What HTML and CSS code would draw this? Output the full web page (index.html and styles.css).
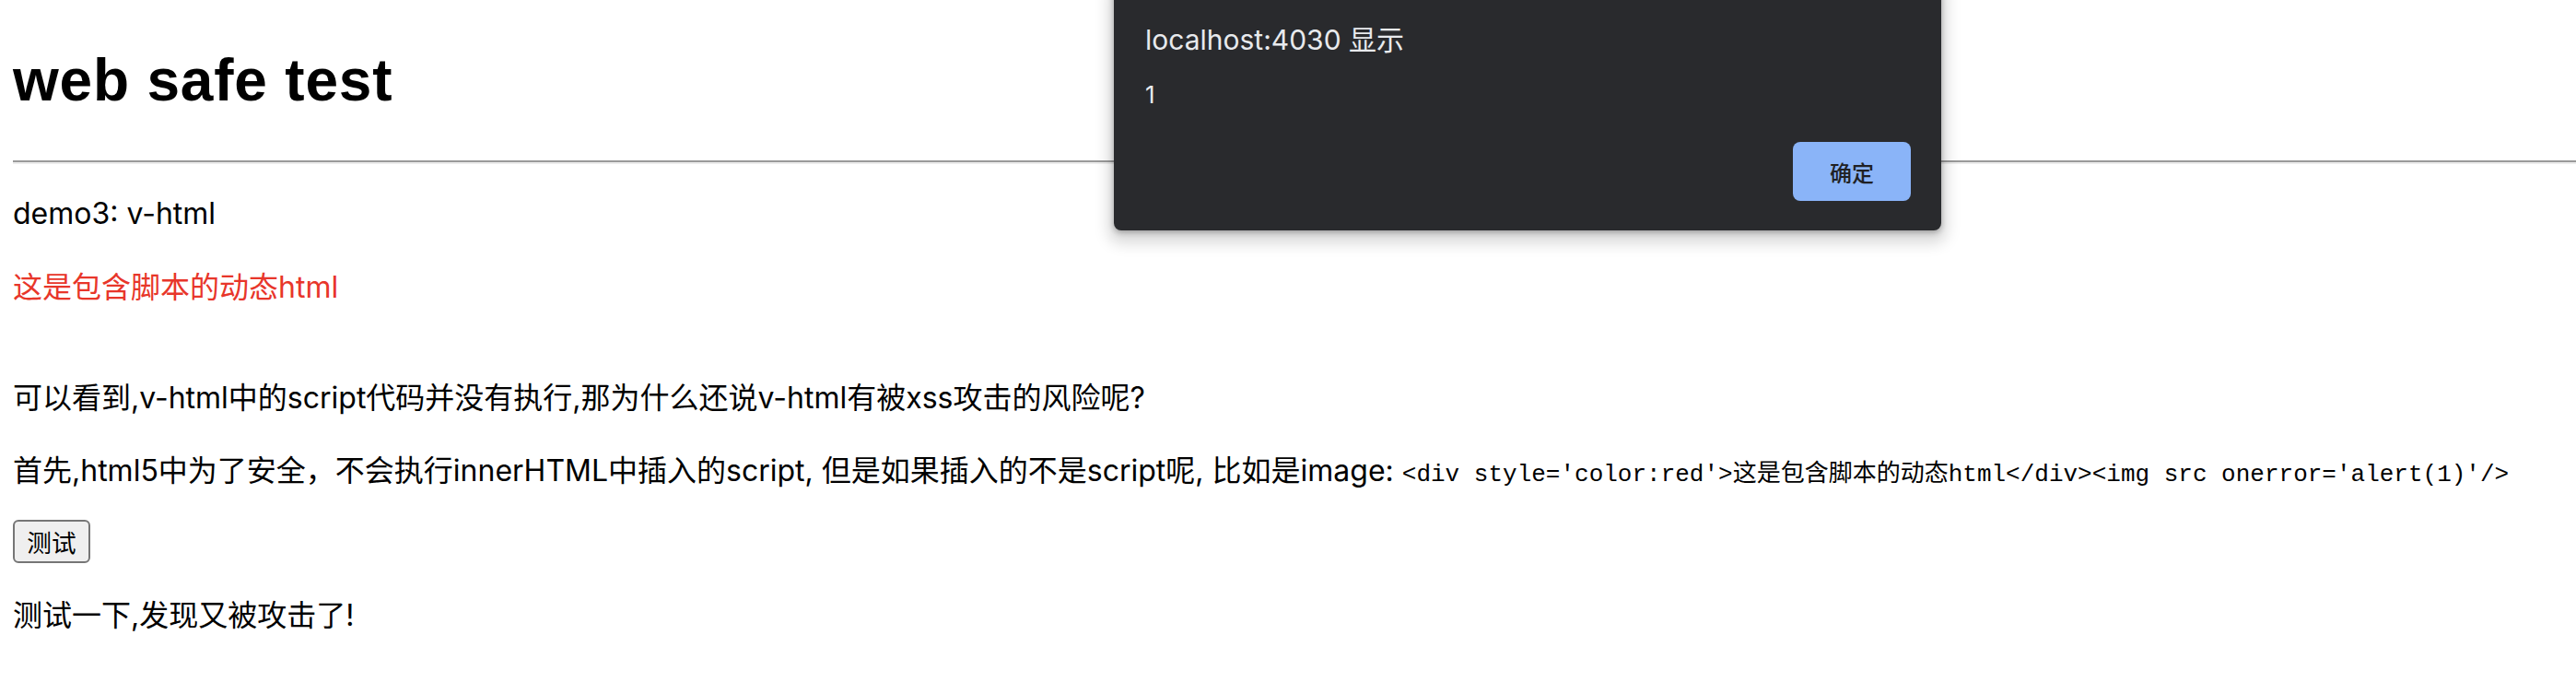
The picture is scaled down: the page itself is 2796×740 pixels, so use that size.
FILE: index.html
```html
<!DOCTYPE html>
<html lang="zh-CN">
<head>
<meta charset="utf-8">
<title>web safe test</title>
<link rel="stylesheet" href="styles.css">
</head>
<body>
<div class="app">
  <h1 class="title">web safe test</h1>
  <hr class="rule">
  <div class="demo">
    <p class="para para-first">demo3: v-html</p>
    <div class="dynamic"><div class="red">这是包含脚本的动态html</div></div>
    <p class="para para-after-dynamic">可以看到,v-html中的script代码并没有执行,那为什么还说v-html有被xss攻击的风险呢?</p>
    <p class="para para-second">首先,html5中为了安全，不会执行innerHTML中插入的script, 但是如果插入的不是script呢, 比如是image: <code class="code">&lt;div style='color:red'&gt;这是包含脚本的动态html&lt;/div&gt;&lt;img src onerror='alert(1)'/&gt;</code></p>
    <button class="btn" type="button">测试</button>
    <p class="para para-last">测试一下,发现又被攻击了!</p>
  </div>
</div>
<div class="dialog" role="alertdialog">
  <div class="dialog-title">localhost:4030 显示</div>
  <div class="dialog-msg">1</div>
  <div class="dialog-actions"><button class="dialog-ok" type="button">确定</button></div>
</div>
</body>
</html>
```
FILE: styles.css
```css
html, body {
  background: #ffffff;
}
body {
  margin: 0;
  padding: 0 0 0 14px;
  font-family: "Inter", "Noto Sans CJK SC", sans-serif;
  font-size: 32px;
  line-height: 48px;
  color: #000000;
}
.app {
  display: flow-root;
}
.title {
  margin: 43px 0 0;
  font-family: "Liberation Sans", "Noto Sans CJK SC", sans-serif;
  font-size: 64px;
  font-weight: 700;
  line-height: 88px;
  letter-spacing: 0.8px;
}
.rule {
  margin: 43px 0 0;
  height: 0;
  border: 0;
  border-top: 2px solid #9a9a9a;
  border-bottom: 2px solid #ececec;
}
.demo {
  display: flex;
  flex-direction: column;
  align-items: flex-start;
}
.para {
  margin: 0;
}
.para-first {
  margin-top: 30px;
}
.dynamic {
  margin-top: 32px;
}
.para-after-dynamic {
  margin-top: 72px;
}
.para-second {
  margin-top: 31px;
}
.para-last {
  margin-top: 33px;
}
.red {
  color: #e8362a;
}
.code {
  font-family: "Liberation Mono", "Noto Sans CJK SC", monospace;
  font-size: 26px;
  line-height: 26px;
}
.btn {
  display: block;
  margin: 29px 0 0;
  width: 84px;
  height: 47px;
  padding: 0;
  font-family: "Inter", "Noto Sans CJK SC", sans-serif;
  font-size: 26.67px;
  color: #000000;
  background: #efefef;
  border: 2px solid #767676;
  border-radius: 6px;
}
.dialog {
  position: absolute;
  left: 1209px;
  top: -20px;
  width: 898px;
  height: 270px;
  box-sizing: border-box;
  padding: 45px 33px 0 34px;
  display: flex;
  flex-direction: column;
  background: #292a2d;
  border-radius: 8px;
  box-shadow: 0 2px 6px rgba(0, 0, 0, 0.3), 0 8px 16px 6px rgba(0, 0, 0, 0.15);
  font-family: "Inter", "Noto Sans CJK SC", sans-serif;
  color: #e8eaed;
}
.dialog-title {
  font-size: 30px;
  line-height: 36px;
}
.dialog-msg {
  margin-top: 26px;
  font-size: 26px;
  line-height: 32px;
}
.dialog-actions {
  display: flex;
  justify-content: flex-end;
  margin-top: 35px;
}
.dialog-ok {
  width: 128px;
  height: 64px;
  padding: 0;
  border: 0;
  border-radius: 8px;
  background: #8ab4f8;
  color: #202124;
  font-family: "Inter", "Noto Sans CJK SC", sans-serif;
  font-size: 24px;
  font-weight: 500;
}
```
